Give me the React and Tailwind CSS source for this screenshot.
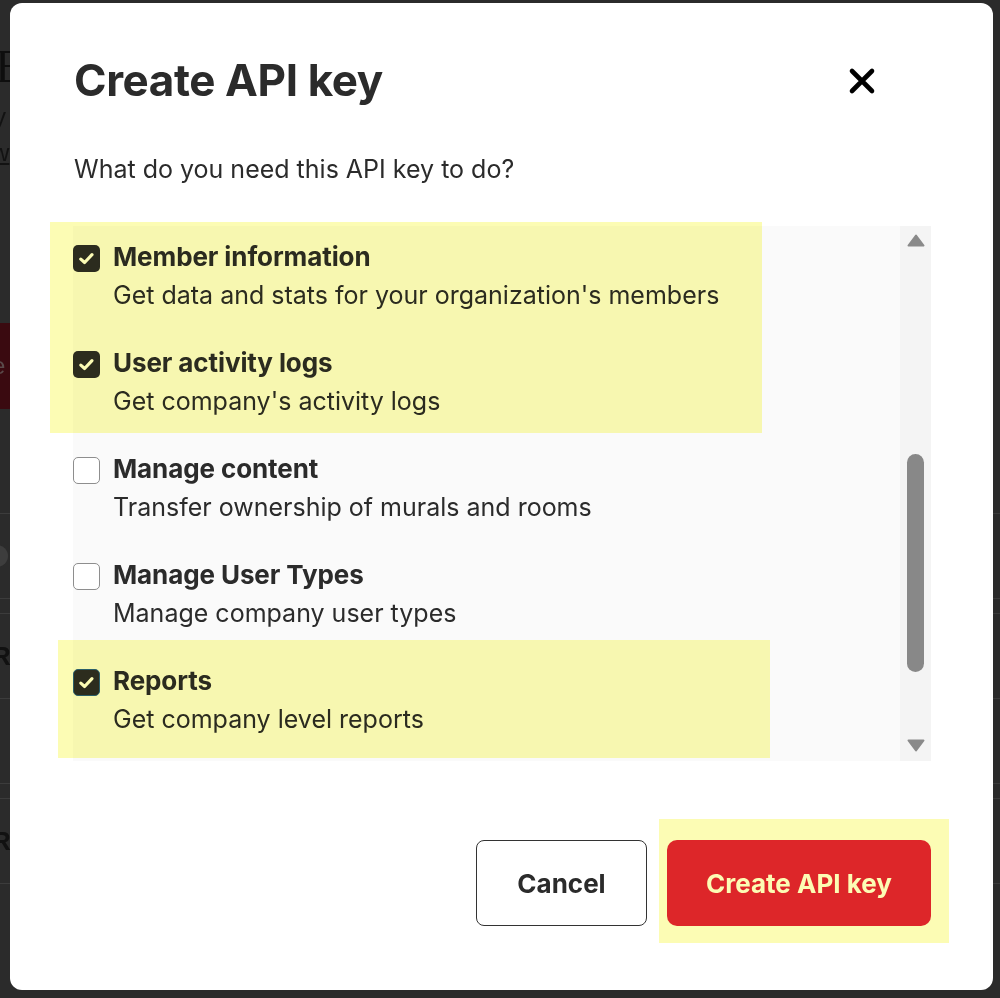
import React from "react";

const items = [
  { title: "Member information", desc: "Get data and stats for your organization's members", checked: true },
  { title: "User activity logs", desc: "Get company's activity logs", checked: true },
  { title: "Manage content", desc: "Transfer ownership of murals and rooms", checked: false },
  { title: "Manage User Types", desc: "Manage company user types", checked: false },
  { title: "Reports", desc: "Get company level reports", checked: true, focus: true },
];

function Checkbox({ checked, focus }) {
  if (checked) {
    return (
      <div
        className={
          "mt-[4px] flex h-[27px] w-[27px] shrink-0 items-center justify-center rounded-[5px] bg-[#2c2c2a] " +
          (focus ? "border-[1.5px] border-[#2a5f95]" : "")
        }
      >
        <svg width="19" height="19" viewBox="0 0 18 18" fill="none">
          <path d="M3.6 9.6 L7.2 12.8 L14.2 5.4" stroke="#ffffff" strokeWidth="3" strokeLinecap="round" strokeLinejoin="round" />
        </svg>
      </div>
    );
  }
  return <div className="mt-[4px] h-[27px] w-[27px] shrink-0 rounded-[5px] border-[1.5px] border-[#8e8e8e] bg-white" />;
}

function BackgroundPage() {
  return (
    <div className="flex h-full w-full flex-col font-['Liberation_Sans',sans-serif] text-[#111]">
      <div className="h-[42px]" />
      <div className="ml-[-20px] h-[60px] font-['Liberation_Serif',serif] text-[46px] leading-[50px] text-[#0e0e0e]">IE</div>
      <div className="ml-[-6px] h-[36px] text-[24px] leading-[30px] text-[#121212]">y</div>
      <div className="ml-[-8px] h-[40px] text-[24px] leading-[30px] text-[#121212] underline">w</div>
      <div className="h-[145px]" />
      <div className="flex h-[86px] w-[60px] items-center bg-[#3a0a10] pl-0 text-[24px] text-[#5a4a4a]">
        <span className="ml-[-8px]">e</span>
      </div>
      <div className="h-[105px] border-b border-[#3c3c3c]" />
      <div className="flex h-[85px] items-center border-b border-[#3c3c3c]">
        <div className="ml-[-14px] h-[22px] w-[22px] rounded-full bg-[#3d3d3d]" />
      </div>
      <div className="h-[15px] border-b border-[#3c3c3c]" />
      <div className="flex h-[85px] items-center border-b border-[#3c3c3c] pl-0 text-[26px] font-bold text-[#111]">
        <span className="ml-[-8px]">R</span>
      </div>
      <div className="h-[85px] border-b border-[#3c3c3c]" />
      <div className="flex h-[15px] items-center border-b border-[#3c3c3c]" />
      <div className="flex h-[85px] items-center border-b border-[#3c3c3c] text-[26px] font-bold text-[#111]">
        <span className="ml-[-8px]">R</span>
      </div>
    </div>
  );
}

export default function App() {
  return (
    <div className="relative h-[998px] w-[1000px] overflow-hidden bg-[#2b2b2b]">
      <BackgroundPage />
      <div className="absolute left-[10px] top-[3px] flex h-[987px] w-[983px] flex-col rounded-[12px] bg-white pl-[63px] pr-[62px] font-['Inter',sans-serif] text-[#2b2b2b]">
        <div className="flex items-center justify-between pt-[51px]">
          <h1 className="ml-[1px] text-[44px] font-bold leading-[53px] tracking-[-0.4px] text-[#2b2b2b]">Create API key</h1>
          <button className="mr-[49px] flex h-[40px] w-[40px] items-center justify-center">
            <svg width="28" height="28" viewBox="0 0 28 28" fill="none">
              <path d="M4 4 L24 24 M24 4 L4 24" stroke="#000" strokeWidth="4.6" strokeLinecap="round" />
            </svg>
          </button>
        </div>
        <p className="mt-[46px] ml-[1px] text-[25px] leading-[32px] text-[#2b2b2b]">What do you need this API key to do?</p>
        <div className="mt-[41px] flex h-[535px] bg-[#fafafa]">
          <div className="flex flex-1 flex-col gap-[36px] overflow-hidden pt-[15px]">
            {items.map((it) => (
              <div key={it.title} className="flex gap-[13px]">
                <Checkbox checked={it.checked} focus={it.focus} />
                <div className="flex flex-col gap-[6px]">
                  <div className="text-[26px] font-bold leading-[32px] tracking-[-0.1px]">{it.title}</div>
                  <div className="text-[25px] leading-[32px]">{it.desc}</div>
                </div>
              </div>
            ))}
          </div>
          <div className="flex w-[31px] flex-col items-center bg-[#f4f4f4]">
            <svg className="mt-[8px]" width="18" height="13" viewBox="0 0 18 13">
              <path d="M9 1.5 L16.5 11.5 L1.5 11.5 Z" fill="#8a8a8a" stroke="#8a8a8a" strokeWidth="2" strokeLinejoin="round" />
            </svg>
            <div className="mt-[207px] h-[218px] w-[17px] rounded-full bg-[#888888]" />
            <div className="flex-1" />
            <svg className="mb-[9px]" width="18" height="13" viewBox="0 0 18 13">
              <path d="M9 11.5 L16.5 1.5 L1.5 1.5 Z" fill="#8a8a8a" stroke="#8a8a8a" strokeWidth="2" strokeLinejoin="round" />
            </svg>
          </div>
        </div>
        <div className="mt-[79px] flex justify-end gap-[20px]">
          <button className="h-[86px] w-[171px] rounded-[8px] border-[1.5px] border-[#333] bg-white text-[26px] font-bold text-[#2b2b2b]">Cancel</button>
          <button className="h-[86px] w-[264px] rounded-[10px] bg-[#e0263a] text-[26px] font-bold text-white">Create API key</button>
        </div>

        {/* annotation highlights */}
        <div className="pointer-events-none absolute left-[40px] top-[219px] h-[211px] w-[712px] bg-[#fcfcb4] mix-blend-multiply" />
        <div className="pointer-events-none absolute left-[48px] top-[637px] h-[118px] w-[712px] bg-[#fcfcb4] mix-blend-multiply" />
        <div className="pointer-events-none absolute left-[649px] top-[816px] h-[124px] w-[290px] bg-[#fcfcb4] mix-blend-multiply" />
      </div>
    </div>
  );
}
